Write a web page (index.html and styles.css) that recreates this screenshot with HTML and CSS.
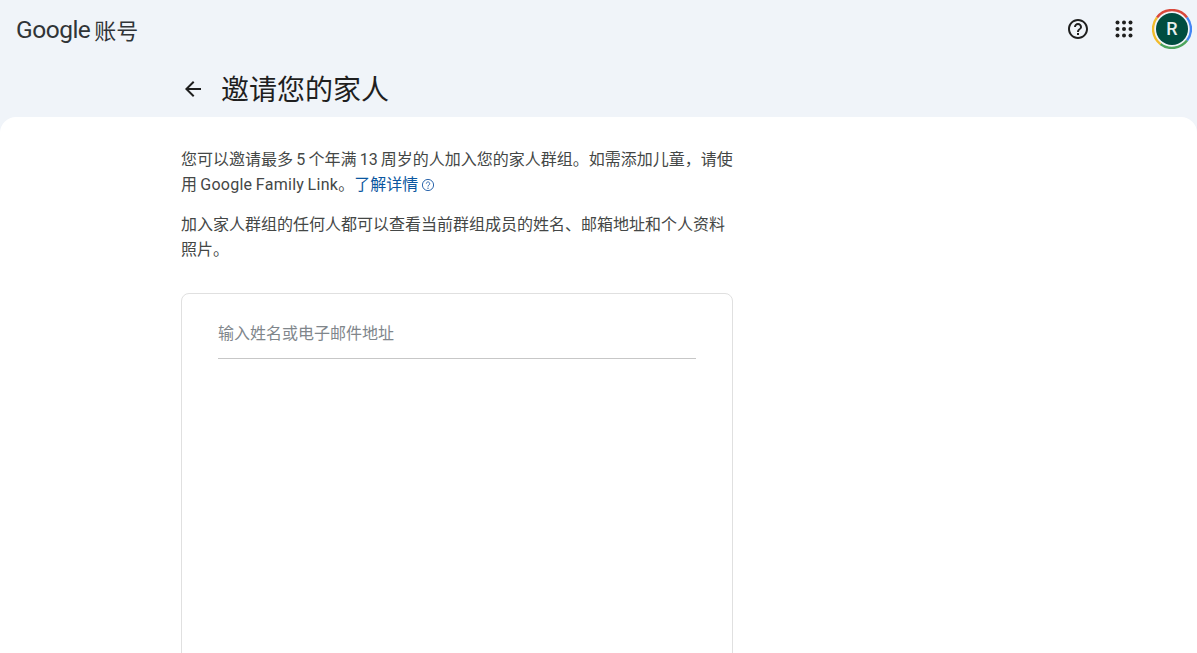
FILE: index.html
```html
<!DOCTYPE html>
<html lang="zh-CN">
<head>
<meta charset="utf-8">
<title>邀请您的家人</title>
<link rel="stylesheet" href="styles.css">
</head>
<body>
<header class="topbar">
  <div class="brand"><span class="brand-google">Google</span><span class="brand-product">账号</span></div>
  <div class="actions">
    <svg class="icon-help" viewBox="0 0 24 24" width="24" height="24"><path fill="#1f1f1f" d="M11 18h2v-2h-2v2zm1-16C6.48 2 2 6.48 2 12s4.48 10 10 10 10-4.48 10-10S17.52 2 12 2zm0 18c-4.41 0-8-3.59-8-8s3.59-8 8-8 8 3.59 8 8-3.59 8-8 8zm0-14c-2.21 0-4 1.79-4 4h2c0-1.1.9-2 2-2s2 .9 2 2c0 2-3 1.75-3 5h2c0-2.25 3-2.5 3-5 0-2.21-1.79-4-4-4z"/></svg>
    <svg class="icon-apps" viewBox="0 0 24 24" width="24" height="24"><g fill="#1f1f1f"><circle cx="5.5" cy="5.5" r="2"/><circle cx="12" cy="5.5" r="2"/><circle cx="18.5" cy="5.5" r="2"/><circle cx="5.5" cy="12" r="2"/><circle cx="12" cy="12" r="2"/><circle cx="18.5" cy="12" r="2"/><circle cx="5.5" cy="18.5" r="2"/><circle cx="12" cy="18.5" r="2"/><circle cx="18.5" cy="18.5" r="2"/></g></svg>
    <div class="avatar-ring">
      <svg viewBox="0 0 40 40" width="40" height="40"><g fill="none" stroke-width="2.4"><path stroke="#d9483b" d="M5 8.4A19 19 0 0 1 35 8.4"/><path stroke="#4285f4" d="M35 8.4A19 19 0 0 1 35 31.6"/><path stroke="#4ca55c" d="M35 31.6A19 19 0 0 1 8.4 35"/><path stroke="#f2bb2c" d="M8.4 35A19 19 0 0 1 5 8.4"/></g></svg>
      <div class="avatar">R</div>
    </div>
  </div>
</header>
<div class="title-row">
  <svg class="icon-back" viewBox="0 0 24 24" width="24" height="24"><path fill="#1f1f1f" d="M20 11H7.83l5.59-5.59L12 4l-8 8 8 8 1.41-1.41L7.83 13H20v-2z"/></svg>
  <h1 class="page-title">邀请您的家人</h1>
</div>
<main class="sheet">
  <div class="content">
    <p class="para">您可以邀请最多 5 个年满 13 周岁的人加入您的家人群组。如需添加儿童&#xFF0C;请使用 <span class="latin">Google Family Link</span>。<a class="learn" href="#">了解详情</a><svg class="icon-info" viewBox="0 0 14 14" width="14" height="14"><g fill="none" stroke="#2f68ad" stroke-width="1"><circle cx="7" cy="7" r="5.6"/><path d="M5.3 5.6A1.7 1.7 0 1 1 8 7c-.7.4-1 .8-1 1.6"/></g><circle cx="7" cy="10.2" r=".7" fill="#2f68ad"/></svg></p>
    <p class="para">加入家人群组的任何人都可以查看当前群组成员的姓名、邮箱地址和个人资料照片。</p>
    <section class="card">
      <div class="field">输入姓名或电子邮件地址</div>
    </section>
  </div>
</main>
</body>
</html>
```

FILE: styles.css
```css
* { box-sizing: border-box; }
html, body { margin: 0; height: 100%; }
body {
  height: 653px;
  overflow: hidden;
  display: flex;
  flex-direction: column;
  background: #f0f4f9;
  color: #1f1f1f;
  font-family: Roboto, "Liberation Sans", "Noto Sans CJK SC", sans-serif;
}
.topbar {
  height: 58px;
  flex: none;
  display: flex;
  align-items: center;
  justify-content: space-between;
  padding: 0 5px 0 16px;
}
.brand { display: flex; align-items: center; gap: 4px; color: #303437; }
.brand-google {
  font-family: Roboto, sans-serif;
  font-size: 24.5px;
  letter-spacing: -0.5px;
  font-weight: 400;
}
.brand-product { font-size: 22px; font-family: "Noto Sans CJK SC", sans-serif; }
.actions { display: flex; align-items: center; }
.icon-help { margin-right: 22px; }
.icon-apps { margin-right: 16px; }
.avatar-ring { position: relative; width: 40px; height: 40px; }
.avatar-ring svg { display: block; }
.avatar {
  position: absolute;
  top: 4px;
  left: 4px;
  width: 32px;
  height: 32px;
  border-radius: 50%;
  background: #004d40;
  color: #e8f0ee;
  font-size: 18px;
  font-weight: 500;
  line-height: 32px;
  text-align: center;
}
.title-row {
  height: 59px;
  flex: none;
  display: flex;
  align-items: center;
  padding-left: 181px;
  gap: 16px;
}
.icon-back { margin-top: 2px; }
.page-title {
  margin: 0;
  font-family: "Noto Sans CJK SC", sans-serif;
  font-size: 28px;
  font-weight: 400;
  line-height: 40px;
  color: #1f1f1f;
}
.sheet {
  flex: 1;
  min-height: 0;
  overflow: hidden;
  background: #fff;
  border-radius: 16px 16px 0 0;
  padding: 31px 0 0 181px;
}
.content { width: 552px; }
.para {
  width: 556px;
  margin: 0 0 15px;
  font-family: Roboto, "Noto Sans CJK SC", sans-serif;
  font-size: 16px;
  line-height: 25px;
  word-spacing: -0.75px;
  color: #444746;
}
.para:first-child { margin-top: -1px; }
.latin { letter-spacing: 0.27px; }
.learn { color: #0b57a0; text-decoration: none; }
.icon-info { vertical-align: -2px; margin-left: 3px; }
.card {
  margin-top: 31px;
  height: 500px;
  border: 1px solid #e0e0e0;
  border-radius: 8px;
  padding: 20px 36px 0;
}
.field {
  height: 45px;
  border-bottom: 1px solid #c7c7c7;
  font-family: "Noto Sans CJK SC", sans-serif;
  font-size: 16px;
  line-height: 36px;
  color: #80868b;
}
```
